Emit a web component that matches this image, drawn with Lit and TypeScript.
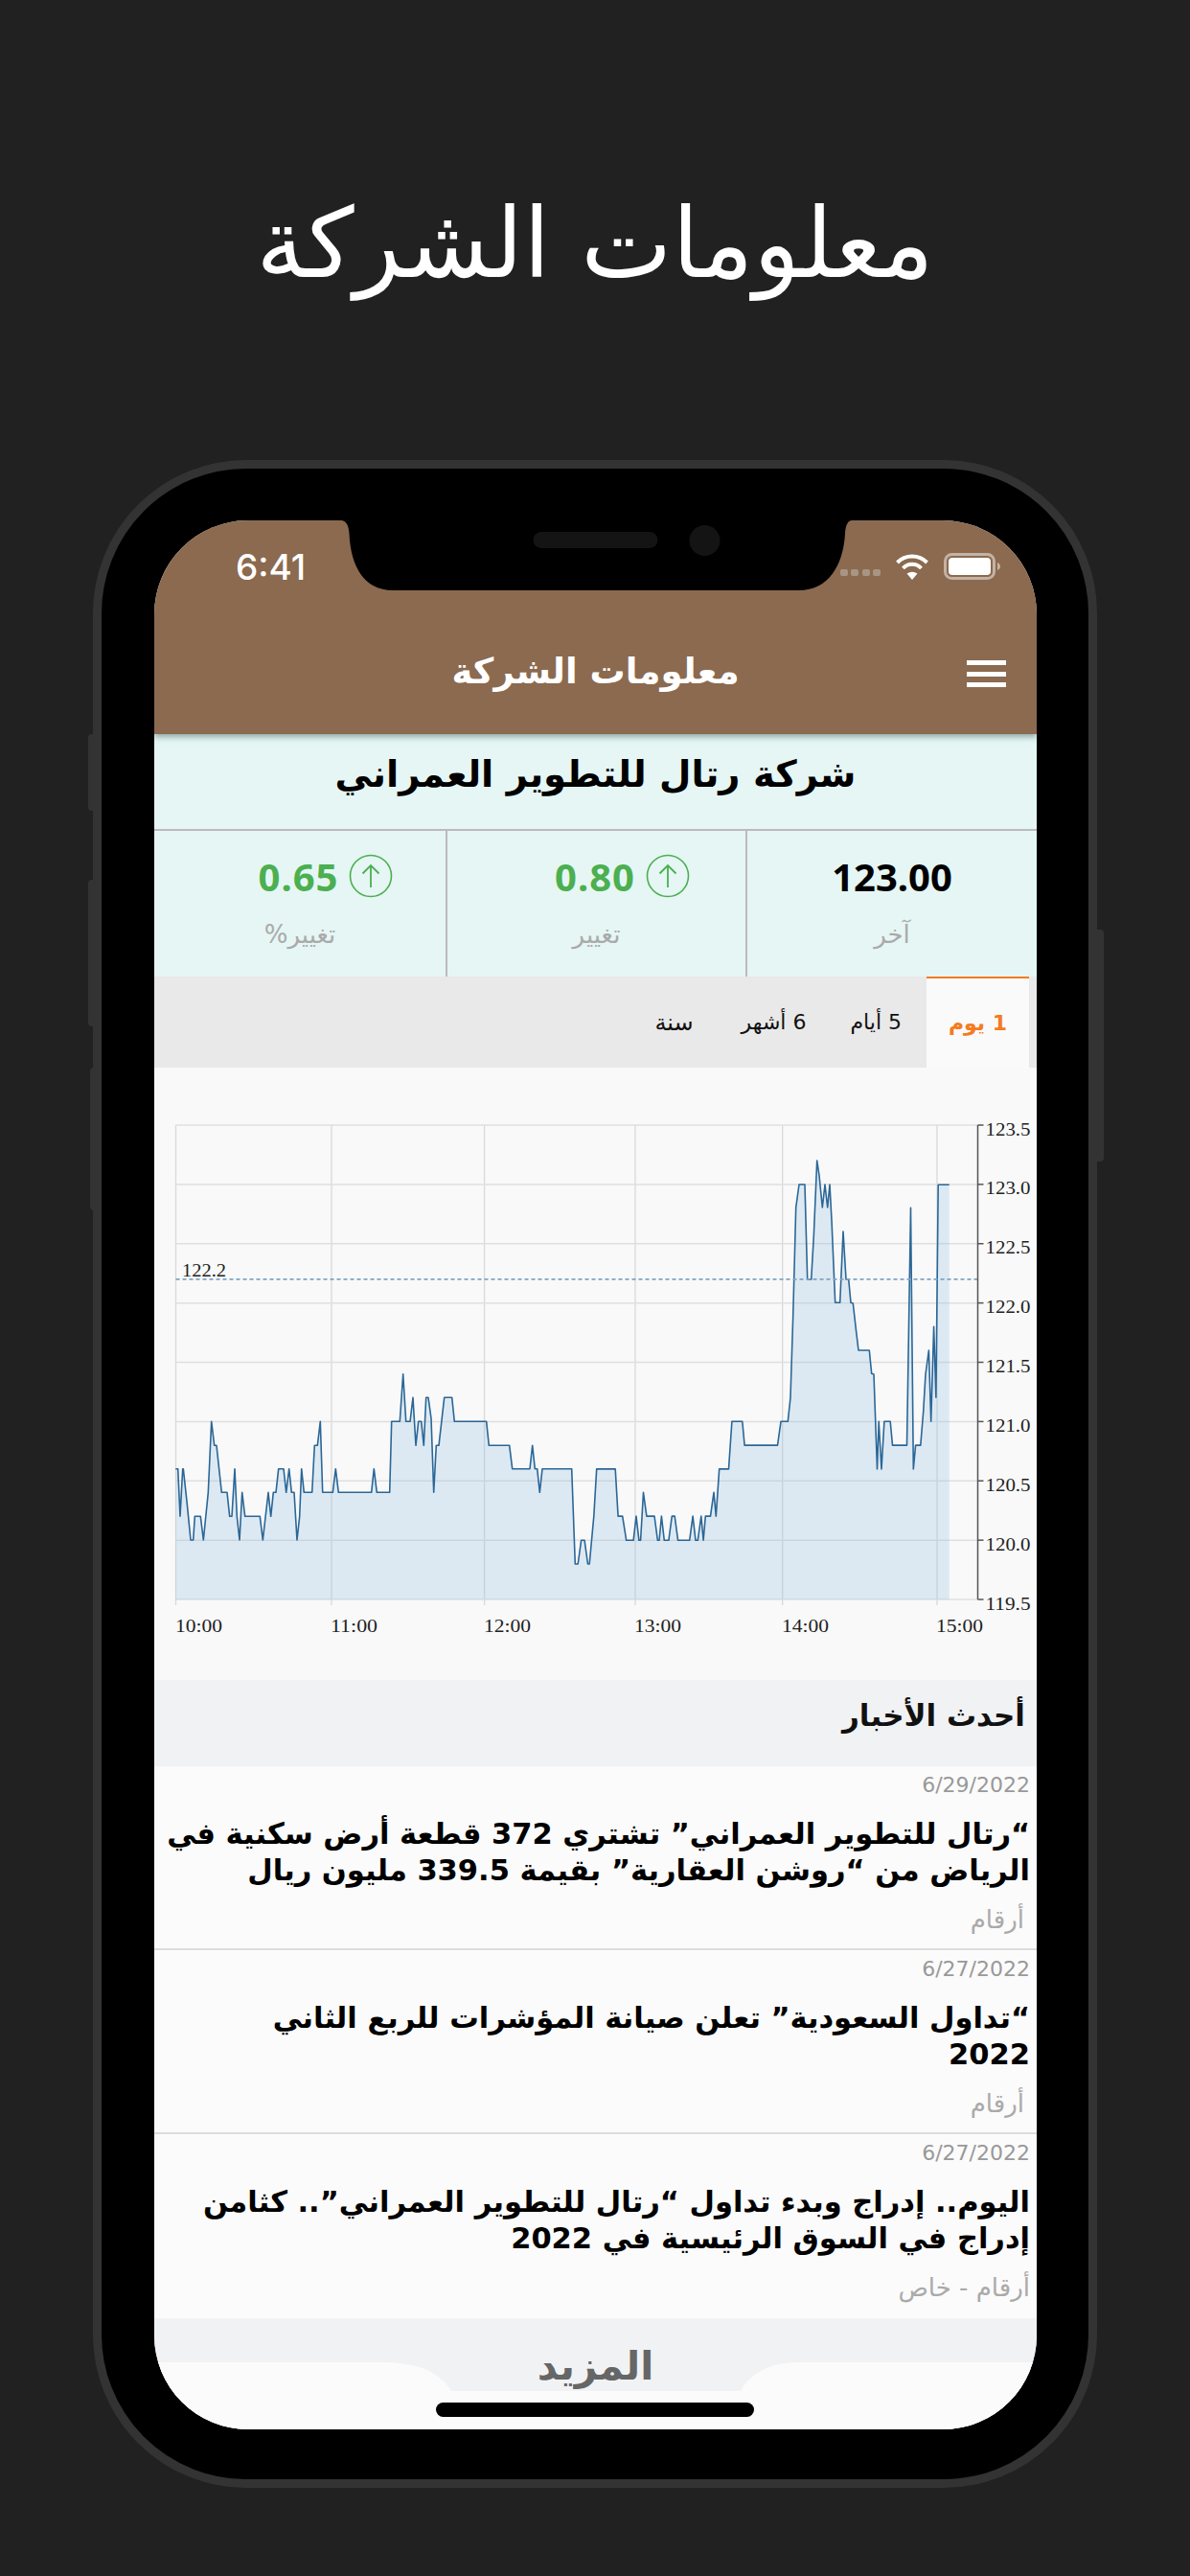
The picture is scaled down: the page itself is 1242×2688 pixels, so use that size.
import { LitElement, html, css, svg } from "lit";
import { customElement } from "lit/decorators.js";

const Z6: number[][] = [[70,398],[77,398],[84,547],[92,398],[94,398],[105,500],[117,621],[125,621],[130,547],[148,547],[157,621],[172,472],[182,250],[191,325],[198,325],[214,472],[231,472],[239,547],[246,547],[255,398],[262,547],[270,621],[278,472],[287,547],[334,547],[343,621],[360,472],[368,547],[376,472],[384,472],[392,398],[408,398],[416,472],[425,398],[433,472],[441,472],[450,621],[458,547],[464,398],[472,472],[497,472],[505,325],[514,325],[523,250],[530,472],[562,472],[571,398],[580,472],[683,472],[691,398],[700,472],[740,472],[746,250],[772,250],[782,101],[791,250],[804,250],[813,175],[822,325],[830,250],[839,250],[847,325],[854,175],[861,175],[870,240],[878,472],[886,325],[894,325],[911,175],[935,175],[943,250],[1043,250],[1051,325],[1115,325],[1124,398],[1179,398],[1187,325],[1195,398],[1202,398],[1210,472],[1218,398],[1310,398]];
const Z2a: number[][] = [[767,1330],[772,1330],[778,1263],[784,1263],[790,1330],[793,1330],[801,1195],[806,1062],[840,1062],[845,1195],[853,1195],[860,1263],[873,1263],[878,1195],[883,1263],[886,1263],[891,1128],[897,1195],[911,1195],[917,1263],[920,1263],[924,1195],[929,1263],[937,1263],[943,1195],[948,1195],[954,1263],[975,1263],[981,1195],[986,1263],[990,1263],[996,1195],[1000,1263],[1004,1195],[1013,1195],[1019,1128],[1023,1195],[1029,1062],[1046,1062],[1052,928],[1071,928],[1075,995],[1135,995]];
const Z5: number[][] = [[645,970],[667,970],[675,895],[683,640],[692,300],[702,228],[720,228],[728,525],[740,525],[748,390],[758,153],[765,200],[775,300],[783,228],[791,300],[798,228],[804,340],[815,598],[830,598],[840,375],[849,525],[857,525],[864,598],[871,600],[880,680],[888,747],[922,747],[929,820],[936,822]];
const Z2b: number[][] = [[1316,1062],[1319,928],[1324,1062],[1329,928],[1340,928],[1344,995],[1370,995],[1377,325],[1382,1062],[1386,995],[1395,995],[1400,900],[1404,795],[1410,727],[1414,928],[1419,660],[1423,860],[1427,260],[1447,260]];

// chart-local coordinates: the svg is placed at page x 161, y 1114
const OX = 161, OY = 1114;
const pts: number[][] = [
  ...Z6.map(([x, y]) => [160 + x / 3 - OX, 1400 + y / 3 - OY]),
  ...Z2a.map(([x, y]) => [160 + x / 1.742 - OX, 1140 + y / 2.703 - OY]),
  ...Z5.map(([x, y]) => [600 + x / 3 - OX, 1160 + y / 3 - OY]),
  ...Z2b.map(([x, y]) => [160 + x / 1.742 - OX, 1140 + y / 2.703 - OY]),
];
const linePts = pts.map(p => `${p[0].toFixed(1)},${p[1].toFixed(1)}`).join(" ");
const PL = 183.5 - OX, PT = 1174 - OY, PB = 1669 - OY, PR = 1020.5 - OX;
const areaPts = `${pts[0][0].toFixed(1)},${PB} ${linePts} ${pts[pts.length - 1][0].toFixed(1)},${PB}`;
const vGrid = [183.5, 346, 505.6, 663, 816.7, 978].map(x => x - OX);
const hGrid = [123.5, 123, 122.5, 122, 121.5, 121, 120.5, 120, 119.5];
const yOf = (v: number) => PT + (123.5 - v) * 123.75;
const xLabels: [string, number][] = [["10:00", 183], ["11:00", 345], ["12:00", 505], ["13:00", 662], ["14:00", 816], ["15:00", 977]];

function chart() {
  return html`<svg class="chart" viewBox="0 0 921 640" width="921" height="640">
    ${vGrid.map(x => svg`<line x1=${x} x2=${x} y1=${PT} y2=${PB + 6} stroke="#d9d9d9" stroke-width="1.3"/>`)}
    ${hGrid.map(v => svg`<line x1=${PL} x2=${PR} y1=${yOf(v)} y2=${yOf(v)} stroke="#dfdfdf" stroke-width="1.5"/>`)}
    <polygon points=${areaPts} fill="#9cc4e0" fill-opacity="0.3"/>
    <polyline points=${linePts} fill="none" stroke="#2b6797" stroke-width="1.6" stroke-linejoin="round"/>
    <line x1=${PL} x2=${PR} y1=${yOf(122.2)} y2=${yOf(122.2)} stroke="#7fa3c4" stroke-width="1.6" stroke-dasharray="4 3"/>
    <text class="ax" x=${190 - OX} y=${1332 - OY} textLength="46" lengthAdjust="spacingAndGlyphs">122.2</text>
    <line x1=${PR} x2=${PR} y1=${PT} y2=${PB} stroke="#555" stroke-width="1.5"/>
    ${hGrid.map(v => svg`
      <line x1=${PR} x2=${PR + 6} y1=${yOf(v)} y2=${yOf(v)} stroke="#555" stroke-width="1.5"/>
      <text class="ax" x=${PR + 8} y=${yOf(v) + 10.5} textLength="47" lengthAdjust="spacingAndGlyphs">${v.toFixed(1)}</text>`)}
    ${xLabels.map(([t, x]) => svg`<text class="ax" x=${x - OX} y=${1703 - OY} textLength="49" lengthAdjust="spacingAndGlyphs">${t}</text>`)}
  </svg>`;
}

const news = [
  { d: "6/29/2022", l: ["\u201Cرتال للتطوير العمراني\u201D تشتري 372 قطعة أرض سكنية في", "الرياض من \u201Cروشن العقارية\u201D بقيمة 339.5 مليون ريال"], s: "أرقام" },
  { d: "6/27/2022", l: ["\u201Cتداول السعودية\u201D تعلن صيانة المؤشرات للربع الثاني", "2022"], s: "أرقام" },
  { d: "6/27/2022", l: ["اليوم.. إدراج وبدء تداول \u201Cرتال للتطوير العمراني\u201D.. كثامن", "إدراج في السوق الرئيسية في 2022"], s: "أرقام - خاص", last: true },
];

const upIcon = html`<svg class="up" viewBox="0 0 46 46" width="46" height="46"><circle cx="23" cy="23" r="21.5" fill="none" stroke="#4caf50" stroke-width="1.6"/><path d="M23 35V12M14.5 20.5L23 12l8.5 8.5" fill="none" stroke="#4caf50" stroke-width="1.8"/></svg>`;

@customElement("app-root")
export class AppRoot extends LitElement {
  static styles = css`
    :host { display: block; width: 1242px; height: 2688px; background: #212121; overflow: hidden; font-family: "DejaVu Sans", "Noto Sans", sans-serif; }
    .headline { height: 480px; box-sizing: border-box; padding-top: 199px; margin: 0; text-align: center; color: #fff; font-size: 101px; font-weight: 400; line-height: 110px; direction: rtl; }
    .phone { position: relative; box-sizing: border-box; width: 1048px; height: 2116px; margin-left: 97px; background: #000; border: 9px solid #333; border-radius: 160px; padding: 54px 54px 53px 55px; }
    .btn { position: absolute; background: #333; width: 8px; }
    .b1 { left: -14px; top: 277px; height: 80px; border-radius: 4px 0 0 4px; }
    .b2 { left: -14px; top: 429px; height: 153px; border-radius: 4px 0 0 4px; }
    .b3 { left: -12px; top: 625px; height: 149px; border-radius: 4px 0 0 4px; }
    .b4 { right: -16px; top: 481px; height: 242px; border-radius: 0 4px 4px 0; }
    .screen { position: relative; width: 921px; height: 1992px; border-radius: 98px; overflow: hidden; background: #fbfbfb; display: flex; flex-direction: column; }
    .appbar { flex: none; height: 223px; background: #8b6a4f; color: #fff; display: flex; flex-direction: column; box-shadow: 0 3px 6px rgba(60,90,90,.5); position: relative; z-index: 1; }
    .status { height: 92px; display: flex; justify-content: space-between; align-items: center; }
    .time { font: 500 37px Inter, sans-serif; margin-left: 85px; margin-top: 4px; }
    .sicons { display: flex; align-items: center; gap: 15px; margin-right: 37px; margin-top: 4px; }
    .dots { display: flex; gap: 3.3px; margin-top: 12px; }
    .dots i { width: 8px; height: 7px; border-radius: 2px; background: #a89584; }
    .navrow { flex: 1; display: flex; align-items: center; justify-content: center; position: relative; }
    .navtitle { font-size: 37px; font-weight: 700; direction: rtl; }
    .burger { position: absolute; right: 32px; top: 54px; width: 41px; display: flex; flex-direction: column; gap: 6.5px; }
    .burger i { height: 5px; background: #fff; display: block; }
    .company { flex: none; height: 101px; box-sizing: border-box; background: #e5f6f4; border-bottom: 2px solid #bbb; display: flex; align-items: center; justify-content: center; font-size: 38.5px; font-weight: 700; color: #000; direction: rtl; padding-bottom: 16px; }
    .stats { flex: none; height: 152px; background: #e5f6f4; display: grid; grid-template-columns: 304px 313px 304px; }
    .stat { display: flex; flex-direction: column; align-items: center; box-sizing: border-box; padding-top: 19px; }
    .stat + .stat { border-left: 2px solid #bbb; }
    .val { height: 56px; display: flex; align-items: center; gap: 11px; font: 700 40px "Noto Sans", sans-serif; }
    .green { color: #4caf50; letter-spacing: 1px; padding-left: 54px; }
    .lab { margin-top: 18px; color: #aaa; font-size: 26px; direction: rtl; }
    .tabs { flex: none; height: 95px; background: #e9e9e9; display: flex; justify-content: flex-end; padding-right: 8px; direction: ltr; }
    .tab { display: flex; align-items: center; justify-content: center; font-size: 22px; color: #111; direction: rtl; margin-right: 46px; }
    .tab.year { font-size: 24px; margin-right: 50px; }
    .tab.near { margin-right: 26px; }
    .tab.on { width: 107px; margin-right: 0; background: #fafafa; border-top: 2px solid #f47b20; box-sizing: border-box; color: #f47b20; font-weight: 700; }
    .chartwrap { flex: none; height: 639px; background: #f9f9f9; }
    .chart { display: block; }
    .ax { font: 19px "Liberation Serif", serif; fill: #222; }
    .secthead { flex: none; height: 90px; background: #f1f2f4; display: flex; align-items: center; padding: 0 12px 17px; box-sizing: border-box; font-size: 31px; font-weight: 700; color: #111; direction: rtl; }
    .item { flex: none; height: 192px; box-sizing: border-box; border-bottom: 2px solid #ddd; direction: rtl; padding: 7px 7px 0 7px; background: #fbfbfb; }
    .item.last { border-bottom: 0; }
    .date { direction: ltr; text-align: right; font-size: 22px; line-height: 26px; color: #999; }
    .ttl { margin-top: 19px; font-size: 30.5px; line-height: 38px; font-weight: 700; color: #000; white-space: nowrap; }
    .src { margin-top: 17px; padding-right: 6px; font-size: 26px; line-height: 30px; color: #aaa; }
    .item.last .src { padding-right: 0; }
    .more { flex: 1; background: #f1f2f4; text-align: center; color: #666; font-size: 41px; font-weight: 700; line-height: 100px; direction: rtl; }
    .notch { position: absolute; left: 50%; top: 0; width: 540px; margin-left: -270px; height: 73px; z-index: 2; }
    .tray { position: absolute; left: 0; bottom: 0; display: block; }
    .home { position: absolute; left: 294px; bottom: 13px; width: 332px; height: 15px; border-radius: 8px; background: #000; }
  `;

  render() {
    return html`
      <h1 class="headline">معلومات الشركة</h1>
      <div class="phone">
        <i class="btn b1"></i><i class="btn b2"></i><i class="btn b3"></i><i class="btn b4"></i>
        <div class="screen">
          <div class="appbar">
            <div class="status">
              <span class="time">6:41</span>
              <span class="sicons">
                <span class="dots"><i></i><i></i><i></i><i></i></span>
                <svg viewBox="0 0 36 27" width="36" height="27"><path d="M2.5 9A22 22 0 0 1 33.5 9M8.5 15A13 13 0 0 1 27.5 15" fill="none" stroke="#fff" stroke-width="4"/><path d="M12.5 20.5Q18 17 23.5 20.5L18 27Z" fill="#fff"/></svg>
                <svg viewBox="0 0 60 28" width="60" height="28"><rect x="1.5" y="1.5" width="51" height="25" rx="7" fill="none" stroke="#c4b2a4" stroke-width="3"/><rect x="5" y="5" width="44" height="18" rx="4" fill="#fff"/><path d="M56 10c2 1 3 2 3 4s-1 3-3 4z" fill="#c4b2a4"/></svg>
              </span>
            </div>
            <div class="navrow">
              <span class="navtitle">معلومات الشركة</span>
              <span class="burger"><i></i><i></i><i></i></span>
            </div>
          </div>
          <div class="company">شركة رتال للتطوير العمراني</div>
          <div class="stats">
            <div class="stat"><div class="val green">0.65 ${upIcon}</div><div class="lab">تغيير%</div></div>
            <div class="stat"><div class="val green">0.80 ${upIcon}</div><div class="lab">تغيير</div></div>
            <div class="stat"><div class="val">123.00</div><div class="lab">آخر</div></div>
          </div>
          <div class="tabs">
            <div class="tab year">سنة</div>
            <div class="tab">6 أشهر</div>
            <div class="tab near">5 أيام</div>
            <div class="tab on">1 يوم</div>
          </div>
          <div class="chartwrap">${chart()}</div>
          <div class="secthead">أحدث الأخبار</div>
          ${news.map(n => html`<div class="item ${n.last ? "last" : ""}">
            <div class="date">${n.d}</div>
            <div class="ttl">${n.l.map(t => html`<div>${t}</div>`)}</div>
            <div class="src">${n.s}</div>
          </div>`)}
          <div class="more">المزيد</div>
          <svg class="tray" viewBox="0 0 921 70" width="921" height="70"><path d="M0 0H237C275 0 298 10 310 30H612C620 14 640 0 672 0H921V70H0Z" fill="#fbfbfb"/></svg>
          <svg class="notch" viewBox="0 0 540 73"><path d="M4 0C9 0 12 5 12.5 14C14 48 28 73 58 73H482C512 73 528 48 530 14C530.5 5 533 0 537 0Z" fill="#000"/><rect x="204.5" y="12" width="130" height="17" rx="8.5" fill="#141414"/><circle cx="383.5" cy="21" r="16" fill="#141414"/></svg>
          <div class="home"></div>
        </div>
      </div>`;
  }
}
